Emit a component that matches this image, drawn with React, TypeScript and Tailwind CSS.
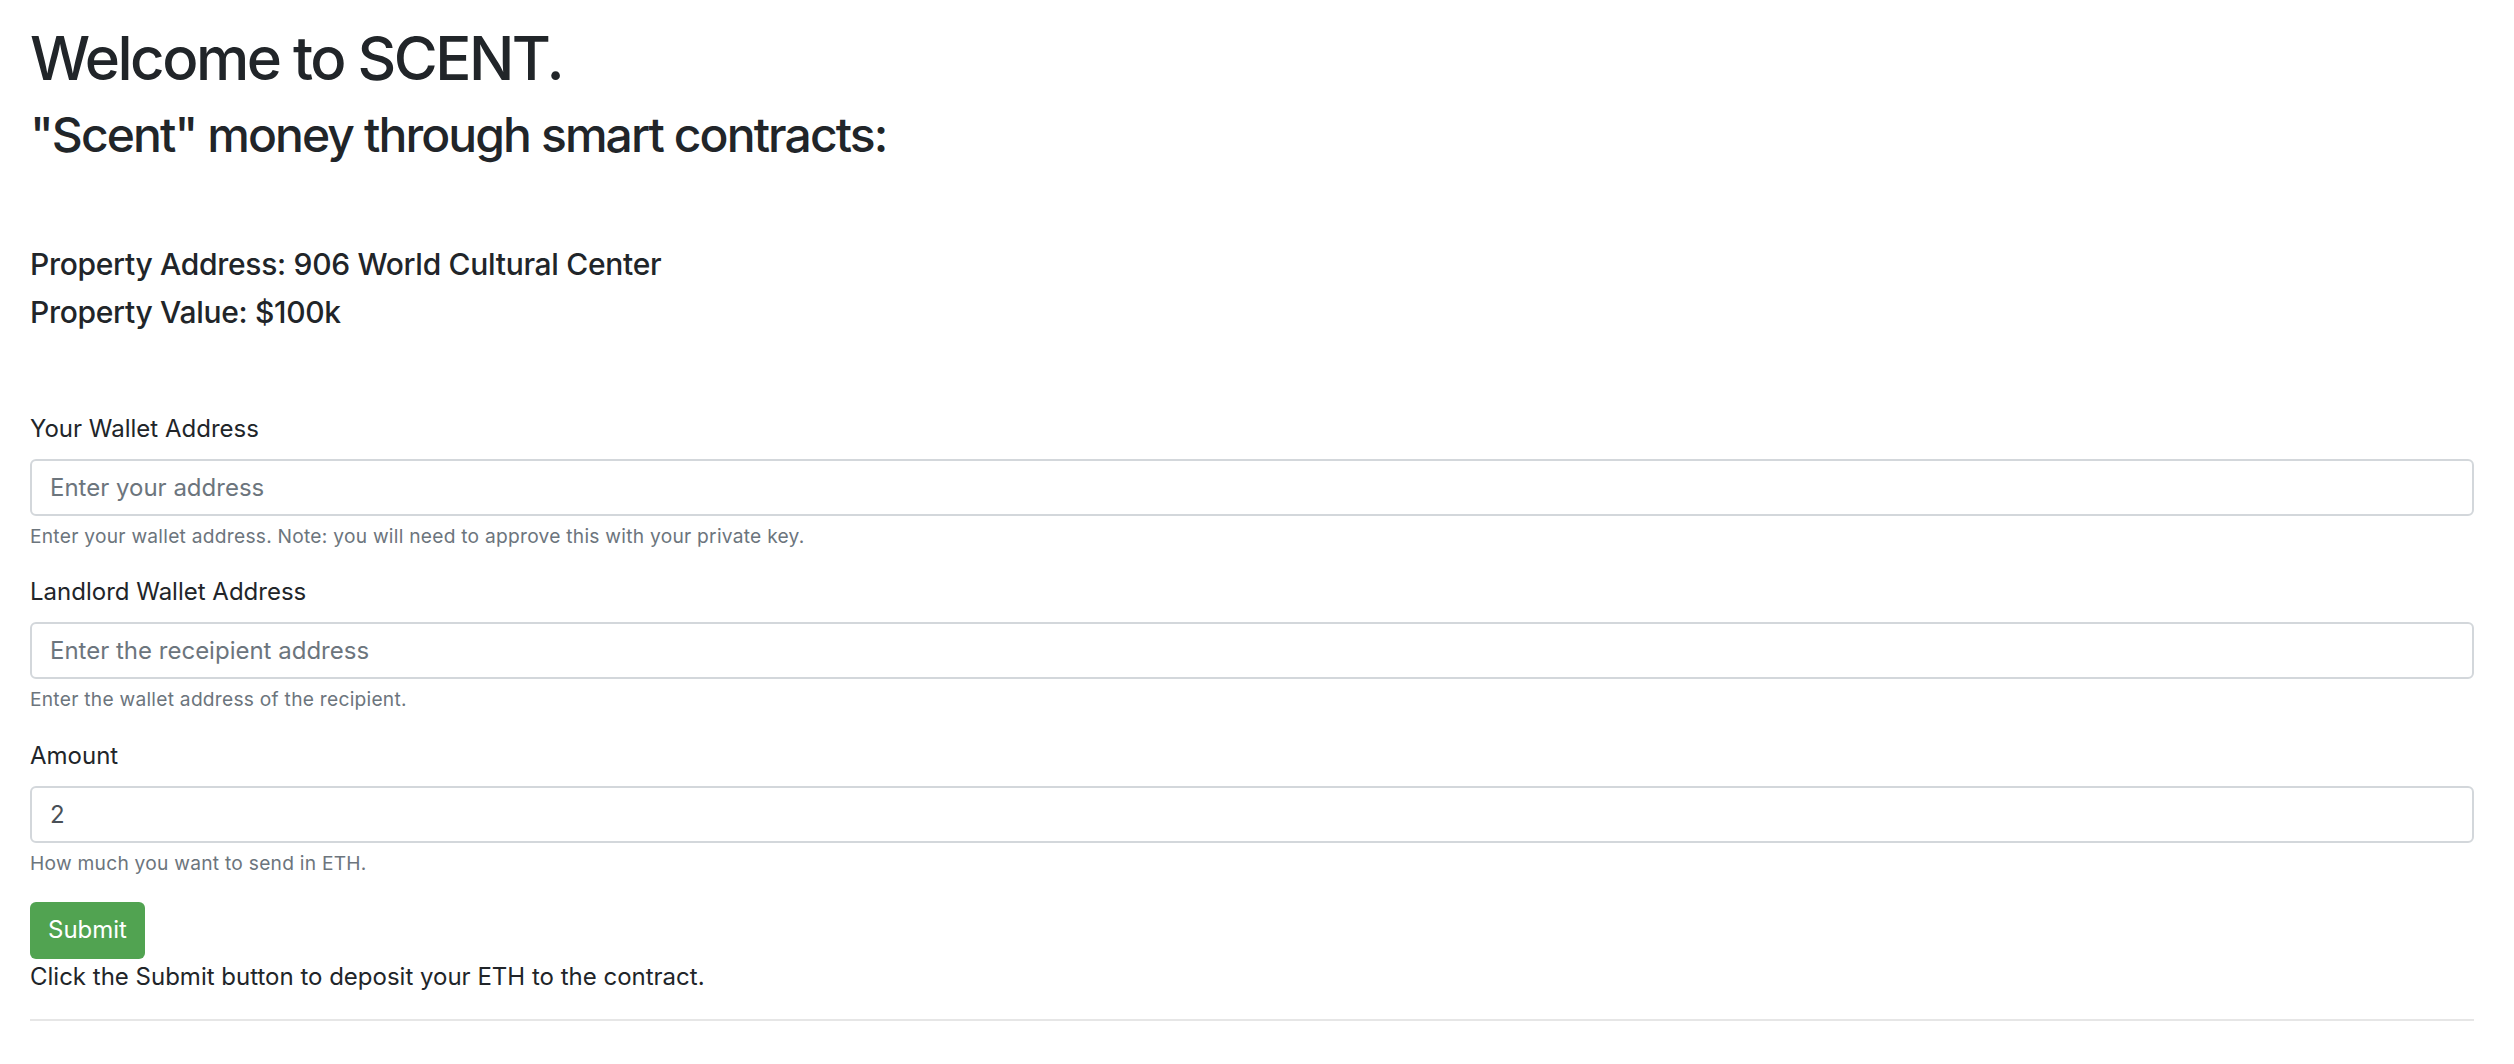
export default function App() {
  return (
    <div className="min-h-screen bg-white pt-[22px] pl-[30px] pr-[40px] font-[Inter,'Liberation_Sans',sans-serif] text-[#212529]">
      <h1 className="text-[60px] leading-[72px] font-medium tracking-[-2.5px] mb-[12px]">Welcome to SCENT.</h1>
      <h2 className="text-[48px] leading-[57.6px] font-medium tracking-[-1.9px]">"Scent" money through smart contracts:</h2>

      <div className="mt-[82px]">
        <h5 className="text-[30px] leading-[36px] font-medium tracking-[-0.3px] mb-[12px]">Property Address: 906 World Cultural Center</h5>
        <h5 className="text-[30px] leading-[36px] font-medium tracking-[-0.3px]">Property Value: $100k</h5>
      </div>

      <form className="mt-[81px]" onSubmit={(e) => e.preventDefault()}>
        <div className="mb-[24px]">
          <label className="block text-[24px] leading-[36px] mb-[12px]">Your Wallet Address</label>
          <input
            type="text"
            placeholder="Enter your address"
            className="block w-full h-[57px] px-[18px] text-[24px] text-[#495057] border-2 border-[#d3d7db] rounded-[6px] placeholder:text-[#6c757d] outline-none"
          />
          <small className="block mt-[6px] text-[19.2px] leading-[28.8px] tracking-[0.25px] text-[#6c757d]">
            Enter your wallet address. Note: you will need to approve this with your private key.
          </small>
        </div>

        <div className="mb-[24px]">
          <label className="block text-[24px] leading-[36px] mb-[12px]">Landlord Wallet Address</label>
          <input
            type="text"
            placeholder="Enter the receipient address"
            className="block w-full h-[57px] px-[18px] text-[24px] text-[#495057] border-2 border-[#d3d7db] rounded-[6px] placeholder:text-[#6c757d] outline-none"
          />
          <small className="block mt-[6px] text-[19.2px] leading-[28.8px] tracking-[0.25px] text-[#6c757d]">
            Enter the wallet address of the recipient.
          </small>
        </div>

        <div className="mb-[24px]">
          <label className="block text-[24px] leading-[36px] mb-[12px]">Amount</label>
          <input
            type="text"
            defaultValue="2"
            className="block w-full h-[57px] px-[18px] text-[24px] text-[#495057] border-2 border-[#d3d7db] rounded-[6px] outline-none"
          />
          <small className="block mt-[6px] text-[19.2px] leading-[28.8px] tracking-[0.25px] text-[#6c757d]">
            How much you want to send in ETH.
          </small>
        </div>

        <button type="submit" className="h-[57px] px-[18px] rounded-[6px] bg-[#51a351] text-white text-[24px] leading-[36px]">
          Submit
        </button>
      </form>

      <p className="text-[24px] leading-[36px]">Click the Submit button to deposit your ETH to the contract.</p>
      <hr className="mt-[24px] border-0 border-t-2 border-[#e6e6e6]" />
    </div>
  );
}
